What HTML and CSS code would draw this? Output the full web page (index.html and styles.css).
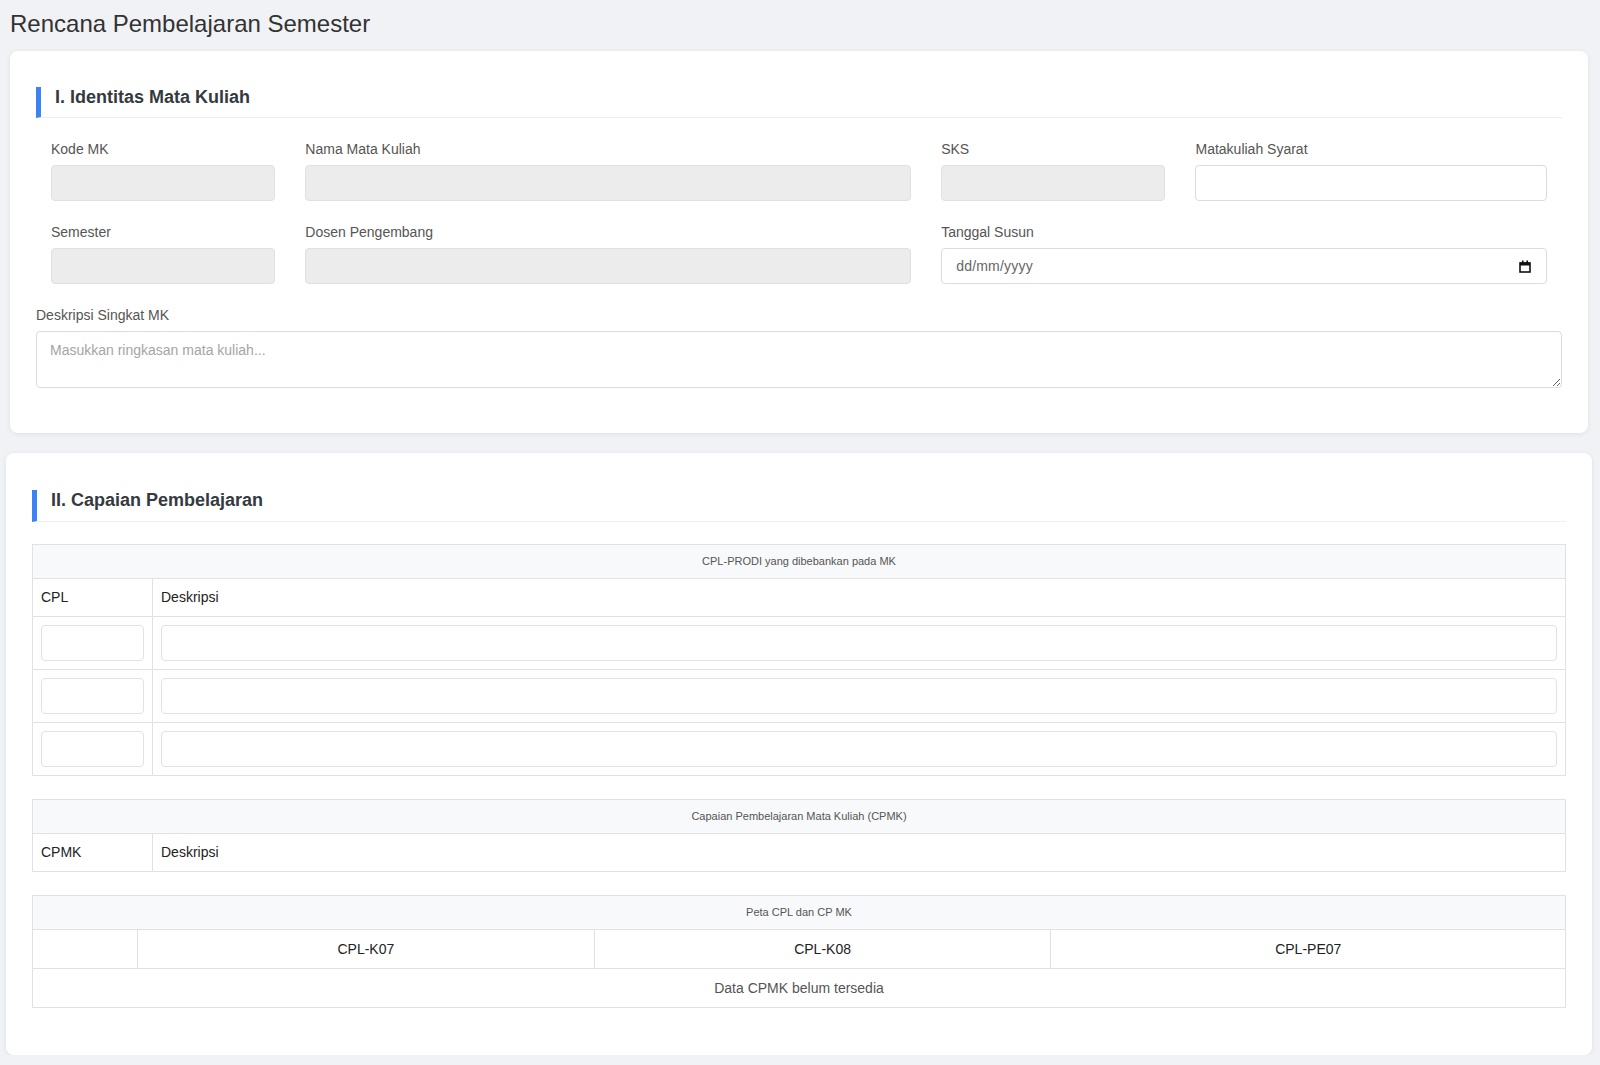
FILE: index.html
```html
<!DOCTYPE html>
<html lang="id">

<head>
    <meta charset="UTF-8">
    <meta name="viewport" content="width=device-width, initial-scale=1.0">
    <title>Rencana Pembelajaran Semester</title>
    <link rel="stylesheet" href="styles.css">
</head>

<body>
    <div class="page">
        <h1 class="page-title">Rencana Pembelajaran Semester</h1>

        <!-- I. Identitas -->
        <div class="card card-identitas">
            <h2 class="section-title">I. Identitas Mata Kuliah</h2>

            <div class="form-grid">
                <div class="field">
                    <label>Kode MK</label>
                    <input type="text" class="input readonly" readonly>
                </div>
                <div class="field">
                    <label>Nama Mata Kuliah</label>
                    <input type="text" class="input readonly" readonly>
                </div>
                <div class="field">
                    <label>SKS</label>
                    <input type="text" class="input readonly" readonly>
                </div>
                <div class="field">
                    <label>Matakuliah Syarat</label>
                    <input type="text" class="input">
                </div>

                <div class="field">
                    <label>Semester</label>
                    <input type="text" class="input readonly" readonly>
                </div>
                <div class="field">
                    <label>Dosen Pengembang</label>
                    <input type="text" class="input readonly" readonly>
                </div>
                <div class="field field-wide">
                    <label>Tanggal Susun</label>
                    <div class="input date-input">
                        <span>dd/mm/yyyy</span>
                        <svg width="12" height="13" viewBox="0 0 12 13">
                            <rect x="1" y="3" width="10" height="9" fill="none" stroke="#111" stroke-width="1.6"/>
                            <rect x="1" y="2.5" width="10" height="3" fill="#111"/>
                            <rect x="3" y="0.5" width="1.6" height="3" fill="#111"/>
                            <rect x="7.4" y="0.5" width="1.6" height="3" fill="#111"/>
                        </svg>
                    </div>
                </div>
            </div>

            <div class="field-desc">
                <label>Deskripsi Singkat MK</label>
                <textarea class="input textarea" placeholder="Masukkan ringkasan mata kuliah..."></textarea>
            </div>
        </div>

        <!-- II. Capaian -->
        <div class="card card-capaian">
            <h2 class="section-title">II. Capaian Pembelajaran</h2>

            <div class="tables">
                <table class="rps-table">
                    <tr>
                        <th colspan="2" class="table-head">CPL-PRODI yang dibebankan pada MK</th>
                    </tr>
                    <tr>
                        <td class="col-code">CPL</td>
                        <td>Deskripsi</td>
                    </tr>
                    <tr>
                        <td class="cell-input"><input type="text" class="input small"></td>
                        <td class="cell-input"><input type="text" class="input small"></td>
                    </tr>
                    <tr>
                        <td class="cell-input"><input type="text" class="input small"></td>
                        <td class="cell-input"><input type="text" class="input small"></td>
                    </tr>
                    <tr>
                        <td class="cell-input"><input type="text" class="input small"></td>
                        <td class="cell-input"><input type="text" class="input small"></td>
                    </tr>
                </table>

                <table class="rps-table">
                    <tr>
                        <th colspan="2" class="table-head">Capaian Pembelajaran Mata Kuliah (CPMK)</th>
                    </tr>
                    <tr>
                        <td class="col-code">CPMK</td>
                        <td>Deskripsi</td>
                    </tr>
                </table>

                <table class="rps-table map-table">
                    <tr>
                        <th colspan="4" class="table-head">Peta CPL dan CP MK</th>
                    </tr>
                    <tr>
                        <td class="col-first"></td>
                        <td class="center">CPL-K07</td>
                        <td class="center">CPL-K08</td>
                        <td class="center">CPL-PE07</td>
                    </tr>
                    <tr>
                        <td colspan="4" class="center empty">Data CPMK belum tersedia</td>
                    </tr>
                </table>
            </div>
        </div>
    </div>
</body>

</html>
```

FILE: styles.css
```css
* {
    box-sizing: border-box;
}

html,
body {
    margin: 0;
    padding: 0;
    background-color: #f0f2f5;
    font-family: "Liberation Sans", Arial, sans-serif;
    font-size: 14px;
    color: #222;
}

.page {
    padding: 10px 8px 0 6px;
}

.page-title {
    margin: 0 0 13px;
    padding-left: 4px;
    font-size: 24px;
    font-weight: normal;
    line-height: 28px;
    color: #333;
}

.card {
    background-color: #fff;
    border-radius: 8px;
    box-shadow: 0 1px 5px rgba(0, 0, 0, .08);
    padding: 26px;
}

.card-identitas {
    margin: 0 4px 20px;
}

.section-title {
    margin: 10px 0 12px;
    padding: 0 14px 9px;
    border-left: 5px solid #3b82f6;
    border-bottom: 1px solid #eceef0;
    font-size: 18px;
    font-weight: bold;
    line-height: 21px;
    color: #343a40;
}

.card-capaian .section-title {
    margin-top: 11px;
    padding-bottom: 10px;
}

/* form */
.form-grid {
    display: grid;
    grid-template-columns: 2fr 5fr 2fr 3fr;
}

.field {
    padding: 11px 15px 12px;
}

.field-wide {
    grid-column: span 2;
}

.field label,
.field-desc label {
    display: block;
    margin-bottom: 8px;
    font-size: 14px;
    line-height: 16px;
    color: #555;
}

.field-desc {
    margin: 11px 0 19px;
}

.input {
    display: block;
    width: 100%;
    height: 36px;
    padding: 0 12px;
    border: 1px solid #dcdcdc;
    border-radius: 4px;
    background-color: #fff;
    font-family: inherit;
    font-size: 14px;
    color: #333;
    outline: none;
}

.input.readonly {
    background-color: #ececec;
    border-color: #e0e0e0;
}

.date-input {
    display: flex;
    align-items: center;
    justify-content: space-between;
    padding: 0 15px 0 14px;
    color: #666;
    letter-spacing: .2px;
}

.textarea {
    height: 57px;
    padding: 10px 13px;
    resize: vertical;
}

.textarea::placeholder {
    color: #a5a5a5;
}

/* tables */
.tables {
    display: flex;
    flex-direction: column;
    gap: 23px;
    padding-top: 10px;
    margin-bottom: 21px;
}

.rps-table {
    width: 100%;
    border-collapse: collapse;
    border: 1px solid #dfe1e3;
}

.rps-table th,
.rps-table td {
    border: 1px solid #dfe1e3;
    padding: 8px;
    line-height: 21px;
    text-align: left;
    font-weight: normal;
}

.rps-table .table-head {
    padding: 10px 8px;
    background-color: #f8f9fa;
    font-size: 11px;
    line-height: 13px;
    text-align: center;
    color: #555;
}

.rps-table .col-code {
    width: 120px;
}

.rps-table .col-first {
    width: 105px;
}

.rps-table .center {
    text-align: center;
    line-height: 22px;
}

.rps-table .empty {
    color: #555;
}

.rps-table .cell-input {
    padding: 8px;
}

.input.small {
    border-color: #e2e2e2;
}
```
